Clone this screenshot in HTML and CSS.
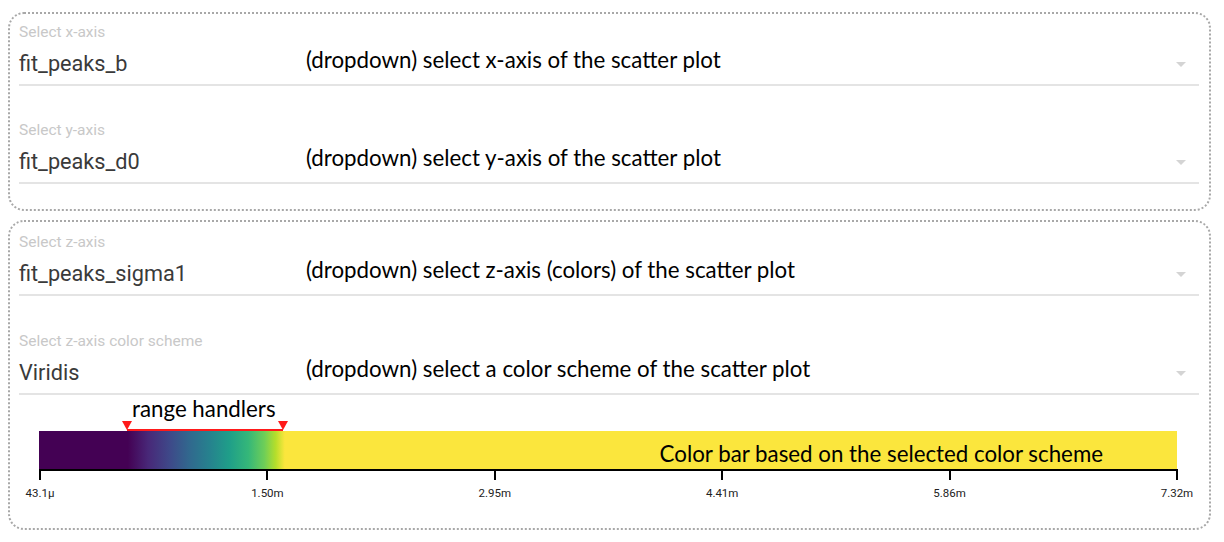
FILE: index.html
```html
<!DOCTYPE html>
<html>
<head>
<meta charset="utf-8">
<link rel="stylesheet" href="styles.css">
</head>
<body>
<div class="page">
  <section class="box">
    <div class="field">
      <div class="label">Select x-axis</div>
      <div class="row">
        <span class="value">fit_peaks_b</span>
        <span class="note">(dropdown) select x-axis of the scatter plot</span>
        <span class="arrow"></span>
      </div>
    </div>
    <div class="field">
      <div class="label">Select y-axis</div>
      <div class="row">
        <span class="value">fit_peaks_d0</span>
        <span class="note">(dropdown) select y-axis of the scatter plot</span>
        <span class="arrow"></span>
      </div>
    </div>
  </section>
  <section class="box box2">
    <div class="field">
      <div class="label">Select z-axis</div>
      <div class="row">
        <span class="value">fit_peaks_sigma1</span>
        <span class="note">(dropdown) select z-axis (colors) of the scatter plot</span>
        <span class="arrow"></span>
      </div>
    </div>
    <div class="field">
      <div class="label">Select z-axis color scheme</div>
      <div class="row">
        <span class="value">Viridis</span>
        <span class="note">(dropdown) select a color scheme of the scatter plot</span>
        <span class="arrow"></span>
      </div>
    </div>
    <div class="colorbar">
      <div class="range-title">range handlers</div>
      <div class="bar">
        <div class="handles">
          <span class="handle handle-left"></span>
          <span class="handle handle-right"></span>
        </div>
        <span class="bar-note">Color bar based on the selected color scheme</span>
      </div>
      <div class="axis">
        <div class="tick"><span>43.1µ</span></div>
        <div class="tick"><span>1.50m</span></div>
        <div class="tick"><span>2.95m</span></div>
        <div class="tick"><span>4.41m</span></div>
        <div class="tick"><span>5.86m</span></div>
        <div class="tick"><span>7.32m</span></div>
      </div>
    </div>
  </section>
</div>
</body>
</html>
```
FILE: styles.css
```css
html, body {
  margin: 0;
  padding: 0;
  background: #ffffff;
}
.page {
  padding: 12px 13px 0 8px;
  display: flex;
  flex-direction: column;
  gap: 9px;
  font-family: Roboto, "Liberation Sans", sans-serif;
}
.box {
  border: 2px dotted #a8a8a8;
  border-radius: 16px;
  padding: 10px 10px 25px 9px;
}
.box2 {
  padding-top: 12px;
  padding-bottom: 0;
  height: 294px;
}
.field + .field {
  margin-top: 36px;
}
.box2 .field + .field {
  margin-top: 37px;
}
.label {
  font-size: 15.5px;
  line-height: 14px;
  color: #c8c8c8;
  position: relative;
  top: 1px;
}
.row {
  display: grid;
  grid-template-columns: 287px 1fr 24px;
  align-items: center;
  margin-top: 13px;
  height: 22px;
  padding-bottom: 11px;
  border-bottom: 2px solid #e4e4e4;
}
.value {
  font-size: 21.7px;
  color: #3a3a3a;
  line-height: 22px;
  position: relative;
  top: 2px;
}
.note {
  font-family: Lato, "Open Sans", sans-serif;
  font-size: 22.3px;
  color: #000;
  line-height: 22px;
  position: relative;
  top: -2px;
}
.arrow {
  justify-self: start;
  width: 0;
  height: 0;
  border-left: 5px solid transparent;
  border-right: 5px solid transparent;
  border-top: 5px solid #d4d4d4;
  margin-top: 5px;
  margin-left: 1px;
}
.colorbar {
  padding-left: 20px;
  width: 1138px;
  margin-top: 2px;
}
.range-title {
  font-family: Lato, "Open Sans", sans-serif;
  font-size: 22.3px;
  line-height: 24px;
  color: #000;
  padding-left: 93px;
}
.bar {
  margin-top: 10px;
  height: 38px;
  position: relative;
  background: linear-gradient(to right,
    #440154 0%, #440154 7.8%,
    #482878 9.6%, #3e4989 11.5%, #31688e 13.2%, #26828e 15%,
    #1f9e89 16.7%, #35b779 18.4%, #6ece58 19.8%, #b5de2b 20.8%,
    #fbe63d 21.6%, #fbe63d 100%);
  display: flex;
  align-items: center;
  justify-content: flex-end;
  padding-right: 74px;
}
.bar-note {
  font-family: Lato, "Open Sans", sans-serif;
  font-size: 22.3px;
  color: #000;
  margin-top: 6px;
}
.handles {
  position: absolute;
  left: 88px;
  top: -2px;
  width: 156px;
  height: 0;
  border-top: 2px solid #ff1a1a;
}
.handle {
  position: absolute;
  top: -10px;
  width: 0;
  height: 0;
  border-left: 5px solid transparent;
  border-right: 5px solid transparent;
  border-top: 9px solid #ff1a1a;
}
.handle-left { left: -5px; }
.handle-right { right: -5px; }
.axis {
  border-top: 2px solid #000;
  display: flex;
  justify-content: space-between;
  margin-right: -1px;
}
.tick {
  width: 2px;
  height: 9px;
  background: #000;
  position: relative;
}
.tick span {
  position: absolute;
  top: 15px;
  left: 1px;
  transform: translateX(-50%);
  font-size: 11.5px;
  color: #222;
  white-space: nowrap;
}
```
